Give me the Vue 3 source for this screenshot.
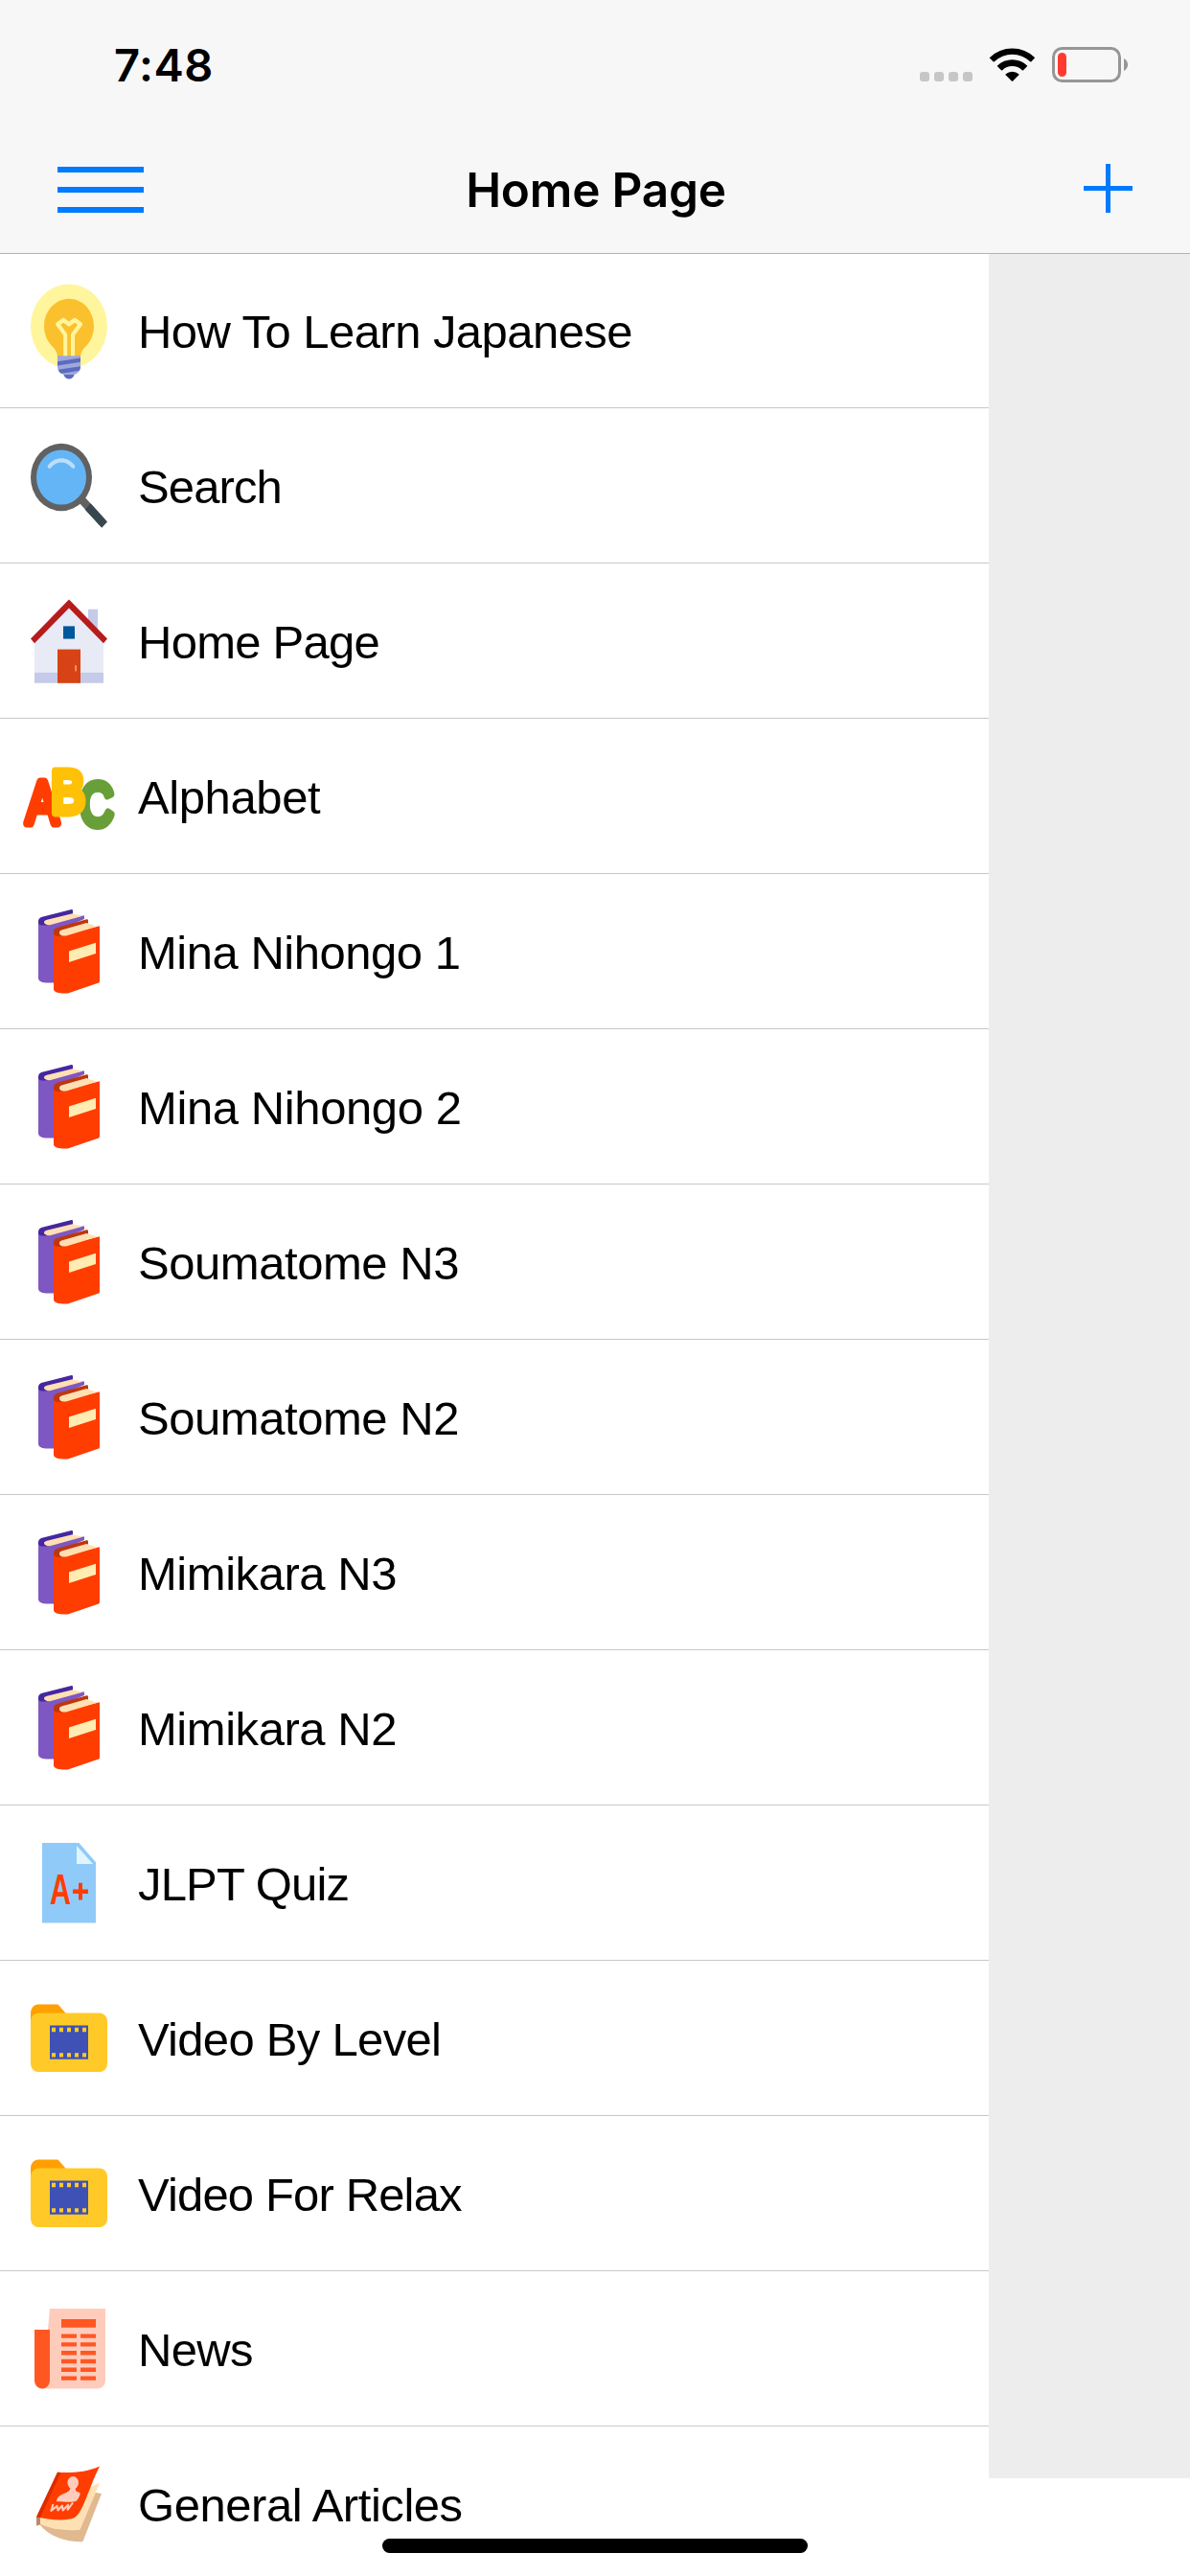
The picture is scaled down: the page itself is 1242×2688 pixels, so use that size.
<template>
  <div class="screen">
    <header class="top-bar">
      <div class="status-bar">
        <span class="clock">7:48</span>
        <div class="status-icons">
          <div class="signal">
            <i v-for="n in 4" :key="n"></i>
          </div>
          <svg class="wifi" viewBox="0 0 49 36">
            <path d="M0.8 11.2 A34 34 0 0 1 48.2 11.2 L44.4 15.2 Q43.8 15.7 43.2 15.2 A27.2 27.2 0 0 0 5.8 15.2 Q5.2 15.7 4.6 15.2 L0.8 11.6 Q0.5 11.4 0.8 11.2Z" />
            <path d="M9 19.4 A22.3 22.3 0 0 1 40 19.4 Q40.4 19.8 40 20.2 L36 24.2 Q35.4 24.7 34.8 24.2 A15 15 0 0 0 14.2 24.2 Q13.6 24.7 13 24.2 L9 20.2 Q8.6 19.8 9 19.4Z" />
            <path d="M17.7 28.2 A10.4 10.4 0 0 1 31.3 28.2 Q31.7 28.7 31.3 29.2 L25.2 35.4 Q24.5 36 23.8 35.4 L17.7 29.2 Q17.3 28.7 17.7 28.2Z" />
          </svg>
          <svg class="battery" viewBox="0 0 80 37">
            <rect x="1.5" y="1.5" width="69" height="34" rx="9" fill="none" stroke="#969696" stroke-width="3" />
            <rect x="6" y="6" width="9" height="25" rx="4.5" fill="#ff3b30" />
            <path d="M75 12 C80.4 14.5 80.4 22.5 75 25Z" fill="#969696" />
          </svg>
        </div>
      </div>
      <nav class="nav-bar">
        <button class="menu-button" type="button" aria-label="Menu">
          <span></span>
          <span></span>
          <span></span>
        </button>
        <h1 class="title">Home Page</h1>
        <button class="add-button" type="button" aria-label="Add">
          <svg viewBox="0 0 51 51">
            <path d="M0 25.5H51M25.5 0V51" stroke="#007aff" stroke-width="5" />
          </svg>
        </button>
      </nav>
    </header>

    <main class="content">
      <ul class="drawer">
        <li v-for="item in items" :key="item.label" class="row">
          <svg class="icon" viewBox="0 0 48 48" preserveAspectRatio="none">
            <g v-if="item.icon === 'idea'">
              <circle fill="#FFF59D" cx="24" cy="22" r="20" />
              <path fill="#FBC02D" d="M37,22c0-7.7-6.6-13.8-14.5-12.9c-6,0.7-10.8,5.5-11.4,11.5c-0.5,4.6,1.4,8.7,4.6,11.3c1.4,1.2,2.3,2.9,2.3,4.8V37h12v-0.1c0-1.8,0.8-3.6,2.2-4.8C35.1,29.7,37,26.1,37,22z" />
              <path fill="#FFF59D" d="M30.6,20.2l-3-2c-0.3-0.2-0.8-0.2-1.1,0L24,19.8l-2.4-1.6c-0.3-0.2-0.8-0.2-1.1,0l-3,2c-0.2,0.2-0.4,0.4-0.4,0.7s0,0.6,0.2,0.8l3.8,4.7V37h2V26c0-0.2-0.1-0.4-0.2-0.6l-3.3-4.1l1.5-1l2.4,1.6c0.3,0.2,0.8,0.2,1.1,0l2.4-1.6l1.5,1l-3.3,4.1C25.1,25.6,25,25.8,25,26v11h2V26.4l3.8-4.7c0.2-0.2,0.3-0.5,0.2-0.8S30.8,20.3,30.6,20.2z" />
              <circle fill="#5C6BC0" cx="24" cy="44" r="3" />
              <path fill="#9FA8DA" d="M26,45h-4c-2.2,0-4-1.8-4-4v-5h12v5C30,43.2,28.2,45,26,45z" />
              <path fill="#5C6BC0" d="M30,41l-11.6,1.6c0.3,0.7,0.9,1.4,1.6,1.8l9.4-1.3C29.8,42.5,30,41.8,30,41zM18,38.7v2L30,39v-2z" />
            </g>
            <g v-else-if="item.icon === 'search'">
              <path d="M29 31.8L31.8 29L43 40.2L40.2 43z" fill="#616161" />
              <circle cx="20" cy="20" r="16" fill="#616161" />
              <path d="M32.4 35.3L35.3 32.4L44 41.1L41.1 44z" fill="#37474F" />
              <circle cx="20" cy="20" r="13" fill="#64B5F6" />
              <path fill="#BBDEFB" d="M26.9,14.2c-1.7-2-4.2-3.2-6.9-3.2s-5.2,1.2-6.9,3.2c-0.4,0.4-0.3,1.1,0.1,1.4c0.4,0.4,1.1,0.3,1.4-0.1C16,13.9,17.9,13,20,13s4,0.9,5.4,2.5c0.2,0.2,0.5,0.4,0.8,0.4c0.2,0,0.5-0.1,0.6-0.2C27.2,15.3,27.2,14.6,26.9,14.2z" />
            </g>
            <g v-else-if="item.icon === 'home'">
              <path d="M42 39H6V23L24 6L42 23z" fill="#E8EAF6" />
              <path d="M39 21L34 16V9h5zM6 39h36v5H6z" fill="#C5CAE9" />
              <path d="M24 4.3L4 22.9L6 25.1L24 8.4L42 25.1L44 22.9z" fill="#B71C1C" />
              <path d="M18 28h12v16H18z" fill="#D84315" />
              <path d="M21 17h6v6h-6z" fill="#01579B" />
              <rect x="27" y="35.5" width="1" height="3" rx="0.5" fill="#FF8A65" />
            </g>
            <g v-else-if="item.icon === 'alphabet'" class="letters">
              <text transform="translate(1.7 37) scale(.858 1)" fill="#FF3D00" stroke="#FF3D00">A</text>
              <text transform="translate(29.8 37.6) scale(.827 1)" fill="#689F38" stroke="#689F38">C</text>
              <text transform="translate(14.6 31.8) scale(.914 1)" fill="#FFC107" stroke="#FFC107">B</text>
            </g>
            <g v-else-if="item.icon === 'books'">
              <path d="M8 9.5V36.6C8 38.2 10 38.9 13 38.9H18V14L32 8.6V7.5Q32 6.8 31.3 7L13 10z" fill="#7E57C2" />
              <path d="M8 10.3C8 8.4 8.7 8 10 7.6L25.3 4.1Q26 4 26 4.7V6.5L12.5 9.5V11.5C10 11.8 8 11.5 8 10.3z" fill="#4527A0" />
              <path d="M25.8 6L31.2 7.2L14 11.5C12 11.5 11 10.8 11 10.1C11 9.4 11.6 9.3 12.5 9z" fill="#FFE0B2" />
              <path d="M16 15V41.8C16 43.2 18.5 44 23 43.9C23.6 43.9 24 43.7 24.5 43.5L39.2 39C39.8 38.8 40 38.5 40 37.9V12.4Q40 11.8 39.4 12L22 16z" fill="#FF3D00" />
              <path d="M16 15.3C16 13.4 16.8 13 18 12.6L33.2 8.8Q34 8.6 34 9.4V11.2L20.5 14.2L21.5 16.6C18 16.8 16 16.8 16 15.3z" fill="#BF360C" />
              <path d="M33.2 10.5L38.6 12.2L22.5 16.6C20.2 16.8 19 16 19 15.2C19 14.3 19.6 14.1 20.5 13.8z" fill="#FFE0B2" />
              <path d="M24 23.9L38 19.9V25L24 29.1z" fill="#FFECB3" />
            </g>
            <g v-else-if="item.icon === 'quiz'">
              <path d="M38 43H10V5H29.2L38 14.2z" fill="#90CAF9" />
              <path d="M28 6.4V15H36.5z" fill="#E1F5FE" />
              <text class="grade" transform="translate(14 34.2) scale(.75 1)">A</text>
              <path d="M26 27h8v2.1h-8zM29 24h2v8.1h-2z" fill="#FF3D00" />
            </g>
            <g v-else-if="item.icon === 'video'">
              <path d="M22.3 12.2L18.8 8.5C18.5 8.2 18.2 8 17.8 8H8C5.8 8 4 9.8 4 12V18H24z" fill="#FFA000" />
              <rect x="4" y="12" width="40" height="28" rx="4" fill="#FFCA28" />
              <path d="M14 18h20v16H14z" fill="#3F51B5" />
              <path d="M15 20h20M15 32h20" stroke="#FFCA28" stroke-width="2" stroke-dasharray="2 2" />
            </g>
            <g v-else-if="item.icon === 'news'">
              <path d="M14 5H43V39C43 41.2 41.2 43 39 43H10z" fill="#FFCCBC" />
              <path d="M6 15H14V39C14 41.2 12.2 43 10 43S6 41.2 6 39z" fill="#FF5722" />
              <path d="M20 10h18v4H20z" fill="#FF5722" />
              <path d="M24 17V39M34 17V39" stroke="#FF5722" stroke-width="8" stroke-dasharray="2 2" />
            </g>
            <g v-else-if="item.icon === 'articles'">
              <path d="M38 18.6L41 19.1L31.2 41.9C22 42 13.5 39.5 8.5 33.5z" fill="#E0B990" />
              <path d="M38 14.8L40 14.1L29.8 36.2C22 37 13 35.8 8 33V29z" fill="#FFE0B2" />
              <path d="M7 30.2H9V33.8L7 34.4z" fill="#B98B6B" />
              <path d="M18 9C26 9.4 33.5 8.8 40 6.1C37.5 10.5 35.5 15.5 33.3 20.5C31.3 25 29.8 28.7 26.8 30.6C22 32.4 13 31.3 7 30.2z" fill="#FF3D00" />
              <path d="M18 9L19.8 9.1L9 30.5L7 30.2z" fill="#DD2C00" />
              <ellipse cx="26.1" cy="13.9" rx="2.9" ry="3" fill="#FFCCBC" />
              <path d="M24.8 15.5H27.8C26.8 18 28 18.3 29.4 18.5C30.3 19 29.6 20.5 28 22.5C25 23.7 21 22.8 17.5 22.8C17.8 20.5 19.8 19.7 22 18.9C23.8 18.2 24.9 17.7 24.8 15.5z" fill="#FFCCBC" />
              <path d="M15.6 24.5L14.7 27.2L17.8 25L18.2 27L20.5 24.8L20.8 27L23.5 24.4L23.3 26.7L25.8 23.7" fill="none" stroke="#FFCCBC" stroke-width="1" stroke-linecap="round" stroke-linejoin="round" />
            </g>
          </svg>
          <span class="label" :style="{ letterSpacing: item.tracking + 'px' }">{{ item.label }}</span>
        </li>
      </ul>
      <div class="dimmed"></div>
    </main>

    <div class="home-indicator"></div>
  </div>
</template>

<script setup>
const items = [
  { label: 'How To Learn Japanese', icon: 'idea', tracking: -0.55 },
  { label: 'Search', icon: 'search', tracking: -0.9 },
  { label: 'Home Page', icon: 'home', tracking: -0.75 },
  { label: 'Alphabet', icon: 'alphabet', tracking: -0.4 },
  { label: 'Mina Nihongo 1', icon: 'books', tracking: -0.48 },
  { label: 'Mina Nihongo 2', icon: 'books', tracking: -0.4 },
  { label: 'Soumatome N3', icon: 'books', tracking: -0.45 },
  { label: 'Soumatome N2', icon: 'books', tracking: -0.45 },
  { label: 'Mimikara N3', icon: 'books', tracking: -0.45 },
  { label: 'Mimikara N2', icon: 'books', tracking: -0.45 },
  { label: 'JLPT Quiz', icon: 'quiz', tracking: -0.85 },
  { label: 'Video By Level', icon: 'video', tracking: -0.7 },
  { label: 'Video For Relax', icon: 'video', tracking: -0.85 },
  { label: 'News', icon: 'news', tracking: -0.7 },
  { label: 'General Articles', icon: 'articles', tracking: -0.45 }
]
</script>

<style>
body {
  margin: 0;
  background: #fff;
}
</style>

<style scoped>
.screen {
  position: relative;
  width: 1242px;
  height: 2688px;
  overflow: hidden;
  background: #fff;
  color: #000;
  font-family: "Liberation Sans", Arial, sans-serif;
}

.top-bar {
  position: relative;
  z-index: 1;
  height: 264px;
  background: #f7f7f7;
  box-shadow: 0 1px 0 #b2b2b2;
}

.status-bar {
  display: flex;
  justify-content: space-between;
  height: 132px;
  padding: 0 64px 0 119px;
}

.clock {
  height: 136px;
  line-height: 136px;
  font-family: Inter, sans-serif;
  font-size: 47px;
  font-weight: 600;
  letter-spacing: 0.5px;
}

.status-icons {
  display: flex;
  align-items: flex-start;
  padding-top: 49px;
}

.signal {
  display: flex;
  gap: 5px;
  margin: 26px 17px 0 0;
}

.signal i {
  width: 10px;
  height: 10px;
  border-radius: 3px;
  background: #c6c6c6;
}

.wifi {
  width: 49px;
  height: 36px;
  margin-right: 17px;
}

.battery {
  width: 80px;
  height: 37px;
}

.nav-bar {
  display: grid;
  grid-template-columns: 90px 1fr 51px;
  align-items: center;
  height: 132px;
  padding: 0 60px;
}

.menu-button,
.add-button {
  padding: 0;
  border: none;
  background: none;
}

.menu-button {
  display: flex;
  flex-direction: column;
  gap: 15px;
}

.menu-button span {
  width: 90px;
  height: 6px;
  background: #007aff;
}

.title {
  margin: 0 0 0 -37px;
  text-align: center;
  font-family: Inter, sans-serif;
  font-size: 49.5px;
  font-weight: 600;
  letter-spacing: -0.2px;
}

.add-button {
  padding-bottom: 3px;
}

.add-button svg {
  display: block;
  width: 51px;
  height: 51px;
}

.content {
  display: flex;
  align-items: flex-start;
}

.drawer {
  width: 1032px;
  margin: 0;
  padding: 0;
  list-style: none;
}

.row {
  display: flex;
  align-items: center;
  gap: 24px;
  box-sizing: border-box;
  height: 162px;
  padding-left: 24px;
  border-bottom: 1px solid #c8c7cc;
}

.icon {
  width: 96px;
  height: 105.6px;
}

.letters {
  font-size: 29px;
  stroke-width: 4px;
  stroke-linejoin: round;
}

.grade {
  fill: #ff3d00;
  font-size: 20.3px;
  font-weight: 700;
}

.label {
  padding-top: 2px;
  font-size: 49px;
  white-space: nowrap;
}

.dimmed {
  flex: 1;
  height: 2322px;
  background: #ededed;
}

.home-indicator {
  position: absolute;
  left: 399px;
  bottom: 24px;
  width: 444px;
  height: 15px;
  border-radius: 8px;
  background: #000;
}
</style>
